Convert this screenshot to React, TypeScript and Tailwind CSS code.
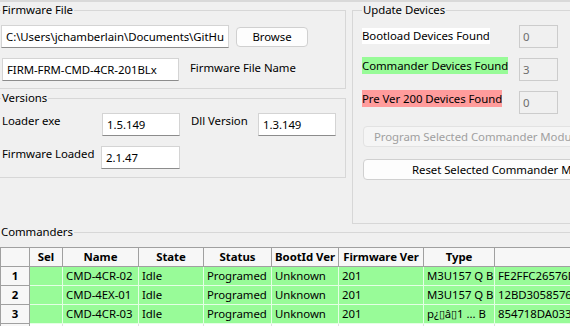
import type { ReactNode } from 'react'

const rows = [
  { n: 1, name: 'CMD-4CR-02', state: 'Idle', status: 'Programed', boot: 'Unknown', fw: '201', type: 'M3U157 Q B', id: 'FE2FFC26576D' },
  { n: 2, name: 'CMD-4EX-01', state: 'Idle', status: 'Programed', boot: 'Unknown', fw: '201', type: 'M3U157 Q B', id: '12BD30585761' },
  { n: 3, name: 'CMD-4CR-03', state: 'Idle', status: 'Programed', boot: 'Unknown', fw: '201', type: 'p¿▯â▯1 ... B', id: '854718DA0331' },
]

const cols = [
  { label: '', w: 'w-[29px]' },
  { label: 'Sel', w: 'w-[33px]' },
  { label: 'Name', w: 'w-[76px]' },
  { label: 'State', w: 'w-[65px]' },
  { label: 'Status', w: 'w-[68px]' },
  { label: 'BootId Ver', w: 'w-[67px]' },
  { label: 'Firmware Ver', w: 'w-[85px]' },
  { label: 'Type', w: 'w-[71px]' },
  { label: '', w: 'w-[140px]' },
]

function TextBox({ value, className }: { value: string; className: string }) {
  return (
    <div className={`h-[23px] bg-white border border-[#d4d4d4] border-b-[#8c8c8c] px-[4px] flex items-center whitespace-nowrap overflow-hidden ${className}`}>
      {value}
    </div>
  )
}

function ReadBox({ value }: { value: string }) {
  return (
    <div className="w-[39px] h-[23px] bg-[#f0f0f0] border border-[#cccccc] px-[3px] flex items-center text-[#6d6d6d]">
      {value}
    </div>
  )
}

function Group({ title, className, children }: { title: string; className: string; children: ReactNode }) {
  return (
    <fieldset className={`border border-[#d7d7d7] min-w-0 ${className}`}>
      <legend className="px-[1px] leading-[14px]">{title}</legend>
      {children}
    </fieldset>
  )
}

export default function App() {
  return (
    <div className="w-[570px] h-[326px] overflow-hidden bg-[#f0f0f0] text-[11.4px] tracking-[-0.05px] text-black font-['Segoe_UI','Noto_Sans',sans-serif]">
      <div className="h-[2px] bg-[#d9d9d9]" />
      <div className="flex items-start gap-[6px] mt-[1px]">
        <div className="flex flex-col ml-[-6px] w-[352px] shrink-0">
          <Group title="Firmware File" className="pl-[6px] pt-[8px] pb-[7px]">
            <div className="flex items-center">
              <TextBox value="C:\Users\jchamberlain\Documents\GitHu" className="w-[228px]" />
              <button className="ml-[7px] w-[72px] h-[20px] bg-[#fdfdfd] border border-[#d0d0d0] rounded-[4px]">Browse</button>
            </div>
            <div className="flex items-start mt-[10px]">
              <TextBox value="FIRM-FRM-CMD-4CR-201BLx" className="ml-[1px] w-[177px]" />
              <span className="ml-[11px] mt-[2px] leading-[16px]">Firmware File Name</span>
            </div>
          </Group>
          <Group title="Versions" className="mt-[2px] pl-[6px] pt-[8px] pb-[8px]">
            <div className="flex items-start">
              <span className="w-[101px] leading-[16px] pl-[1px]">Loader exe</span>
              <TextBox value="1.5.149" className="w-[78px]" />
              <span className="ml-[11px] w-[67px] leading-[16px]">Dll Version</span>
              <TextBox value="1.3.149" className="w-[78px]" />
            </div>
            <div className="flex items-start mt-[10px]">
              <span className="w-[100px] leading-[16px] pl-[1px]">Firmware Loaded</span>
              <TextBox value="2.1.47" className="w-[79px]" />
            </div>
          </Group>
        </div>
        <Group title="Update Devices" className="w-[240px] shrink-0 pl-[9px] pt-[8px] pb-[43px]">
          <div className="flex items-start">
            <div className="w-[157px]">
              <span className="inline-block mt-[3px] bg-white leading-[16px]">Bootload Devices Found</span>
            </div>
            <ReadBox value="0" />
          </div>
          <div className="flex items-start mt-[9px]">
            <div className="w-[157px]">
              <span className="inline-block bg-[#98fb98] leading-[17px]">Commander Devices Found</span>
            </div>
            <div className="mt-[1px]">
              <ReadBox value="3" />
            </div>
          </div>
          <div className="flex items-start mt-[9px]">
            <div className="w-[157px]">
              <span className="inline-block bg-[#ff9c9c] leading-[17px]">Pre Ver 200 Devices Found</span>
            </div>
            <div className="mt-[1px]">
              <ReadBox value="0" />
            </div>
          </div>
          <button className="mt-[12px] ml-[1px] w-[240px] h-[21px] flex items-center pl-[10px] whitespace-nowrap overflow-hidden bg-[#f5f5f5] border border-[#e2e2e2] rounded-[4px] text-[#a0a0a0]">
            Program Selected Commander Modules
          </button>
          <button className="mt-[12px] ml-[1px] w-[240px] h-[21px] flex items-center pl-[48px] whitespace-nowrap overflow-hidden bg-[#fdfdfd] border border-[#d0d0d0] rounded-[4px]">
            Reset Selected Commander Modules
          </button>
        </Group>
      </div>
      <Group title="Commanders" className="mt-[1px] ml-[-6px] w-[660px] pl-[5px] pt-[8px] pb-[20px]">
        <table className="table-fixed border-collapse w-[634px]">
          <colgroup>
            {cols.map((c, i) => (
              <col key={i} className={c.w} />
            ))}
          </colgroup>
          <thead>
            <tr className="h-[19px]">
              {cols.map((c, i) => (
                <th key={i} className="p-0 border border-[#a0a0a0] bg-[#f7f7f7] font-bold text-center whitespace-nowrap overflow-hidden leading-[16px]">
                  {c.label}
                </th>
              ))}
            </tr>
          </thead>
          <tbody>
            {rows.map((r) => (
              <tr key={r.n} className="h-[19px]">
                <td className="p-0 border border-[#a0a0a0] bg-[#f7f7f7] font-bold text-center leading-[16px]">{r.n}</td>
                {['', r.name, r.state, r.status, r.boot, r.fw, r.type, r.id].map((v, i) => (
                  <td key={i} className="p-0 pl-[3px] border border-[#e4ffe4] bg-[#98fb98] whitespace-nowrap overflow-hidden leading-[16px]">
                    {v}
                  </td>
                ))}
              </tr>
            ))}
            <tr className="h-[19px]">
              <td className="p-0 border border-[#a0a0a0] bg-[#f7f7f7]" />
              {Array.from({ length: 8 }).map((_, i) => (
                <td key={i} className="p-0 border border-[#e0e0e0] bg-white" />
              ))}
            </tr>
          </tbody>
        </table>
      </Group>
    </div>
  )
}
